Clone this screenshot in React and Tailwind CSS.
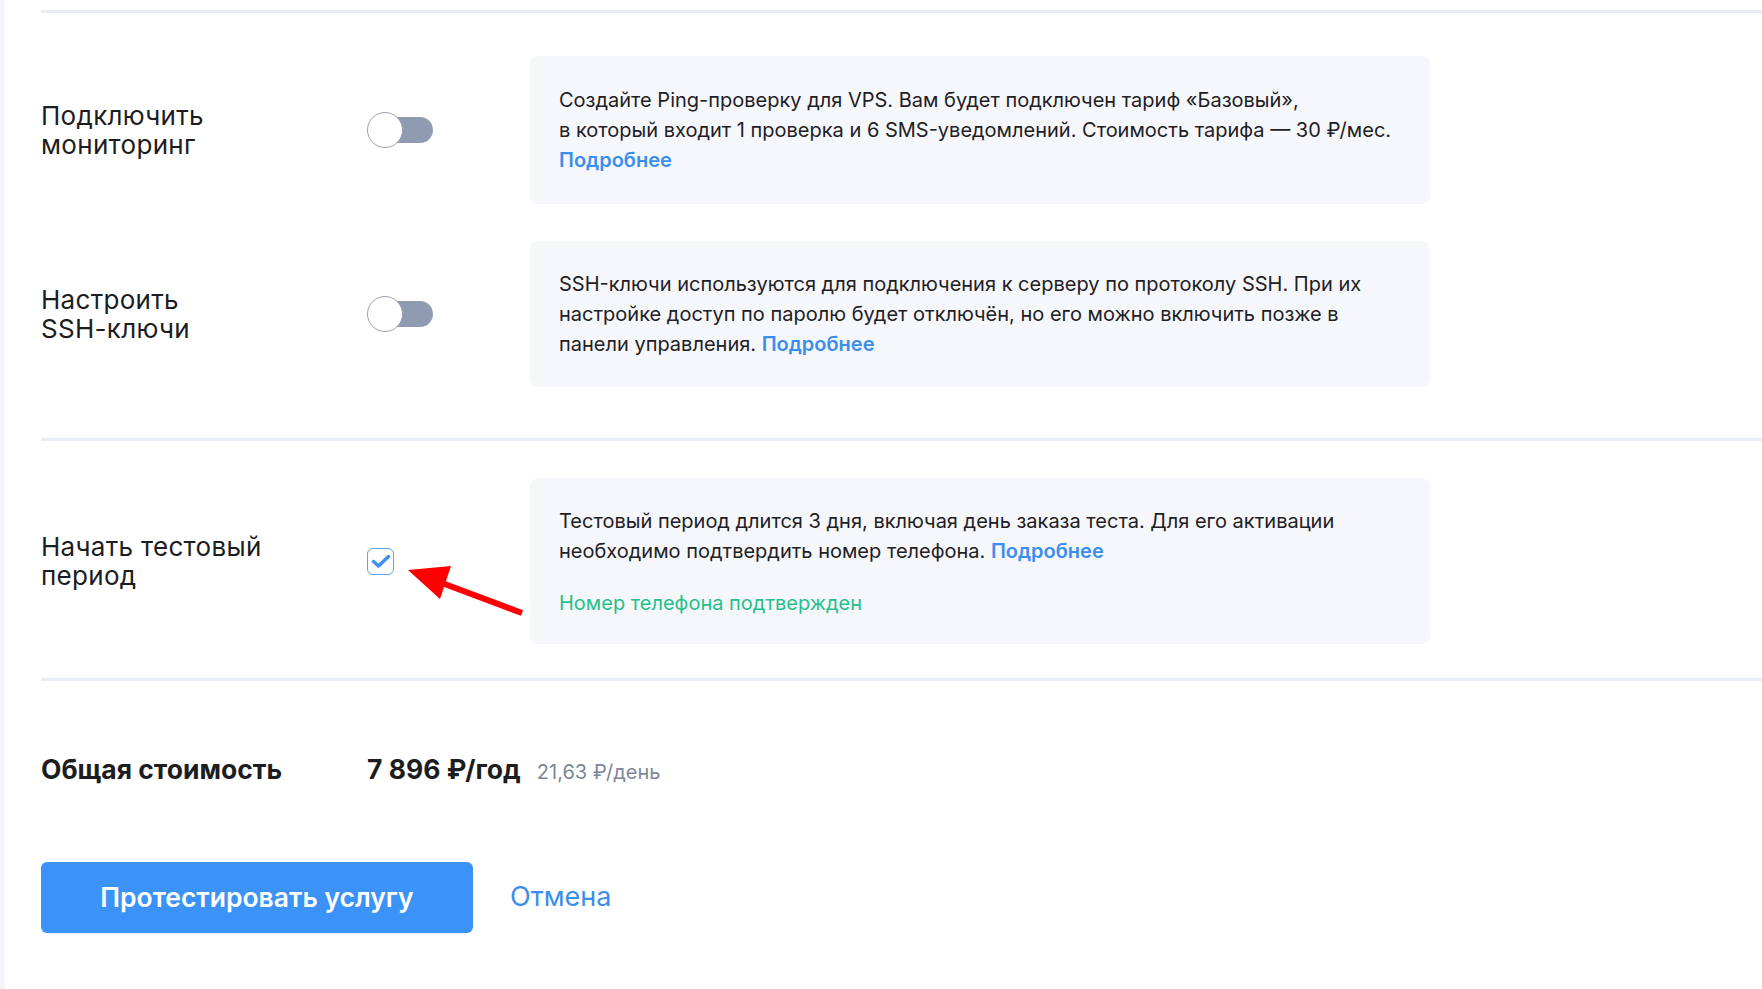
import React from "react";

function Toggle() {
  return (
    <div className="relative w-[66px] h-[36px]">
      <div className="absolute left-[4px] right-0 top-[5px] h-[26px] rounded-full bg-[#8e9bb0]" />
      <div className="absolute left-0 top-0 w-[36px] h-[36px] rounded-full bg-white border border-[#9aa1ad]" />
    </div>
  );
}

function Checkbox() {
  return (
    <div className="w-[27px] h-[27px] rounded-[6px] border-[1.5px] border-[#5aa2f5] bg-white flex items-center justify-center">
      <svg width="24" height="24" viewBox="0 0 24 24" fill="none">
        <path d="M4.5 12.5 L9.5 17 L19.5 7.5" stroke="#3d8ff0" strokeWidth="3.4" strokeLinecap="round" strokeLinejoin="round" />
      </svg>
    </div>
  );
}

function Link({ children }) {
  return <span className="text-[#3a8ef0] font-semibold">{children}</span>;
}

function Row({ label, control, children, className, boxClass }) {
  return (
    <div className={"flex items-center " + className}>
      <div className="w-[326px] shrink-0 text-[26px] leading-[29px] tracking-[0.3px] text-[#1c1d21]">{label}</div>
      <div className="w-[163px] shrink-0 flex items-center">{control}</div>
      <div className={"w-[900px] shrink-0 rounded-[8px] bg-[#f5f7fb] px-[29px] text-[20px] leading-[30px] text-[#1f2024] " + boxClass}>
        {children}
      </div>
    </div>
  );
}

export default function App() {
  return (
    <div
      className="relative w-[1762px] h-[989px] bg-white overflow-hidden flex"
      style={{ fontFamily: "Inter, 'Noto Sans', sans-serif" }}
    >
      <div className="w-[5px] shrink-0 bg-[#f3f5f9]" />
      <div className="flex-1 pl-[36px] flex flex-col">
        <div className="h-[3px] mt-[10px] bg-[#e8edf6]" />

        <Row
          className="mt-[43px]"
          boxClass="py-[29px]"
          label={<>Подключить<br />мониторинг</>}
          control={<Toggle />}
        >
          <p>Создайте Ping-проверку для VPS. Вам будет подключен тариф «Базовый»,</p>
          <p>в который входит 1 проверка и 6 SMS-уведомлений. Стоимость тарифа — 30 ₽/мес.</p>
          <p><Link>Подробнее</Link></p>
        </Row>

        <Row
          className="mt-[37px]"
          boxClass="py-[28px]"
          label={<>Настроить<br />SSH-ключи</>}
          control={<Toggle />}
        >
          <p>SSH-ключи используются для подключения к серверу по протоколу SSH. При их</p>
          <p>настройке доступ по паролю будет отключён, но его можно включить позже в</p>
          <p>панели управления. <Link>Подробнее</Link></p>
        </Row>

        <div className="h-[3px] mt-[51px] bg-[#e8edf6]" />

        <Row
          className="mt-[37px]"
          boxClass="pt-[28px] pb-[26px]"
          label={<>Начать тестовый<br />период</>}
          control={<Checkbox />}
        >
          <p>Тестовый период длится 3 дня, включая день заказа теста. Для его активации</p>
          <p>необходимо подтвердить номер телефона. <Link>Подробнее</Link></p>
          <p className="mt-[22px] text-[#26c08a]">Номер телефона подтвержден</p>
        </Row>

        <div className="h-[3px] mt-[34px] bg-[#e8edf6]" />

        <div className="flex items-baseline mt-[73px] leading-[30px]">
          <div className="w-[326px] shrink-0 text-[26.5px] font-bold text-[#1c1d21]">Общая стоимость</div>
          <div className="text-[26.5px] font-bold text-[#1c1d21]">7 896 ₽/год</div>
          <div className="ml-[16px] text-[20px] text-[#7c879b]">21,63 ₽/день</div>
        </div>

        <div className="flex items-center mt-[75px]">
          <button className="w-[432px] h-[71px] rounded-[6px] bg-[#3b93f7] text-white text-[26.5px] font-semibold">
            Протестировать услугу
          </button>
          <span className="ml-[37px] text-[27px] text-[#3a8ef0]">Отмена</span>
        </div>
      </div>

      <svg className="absolute left-0 top-0 pointer-events-none" width="1762" height="989">
        <line x1="522" y1="613" x2="442" y2="583" stroke="#ff0000" strokeWidth="6" />
        <polygon points="408,570 451,566 440,599" fill="#ff0000" />
      </svg>
    </div>
  );
}
